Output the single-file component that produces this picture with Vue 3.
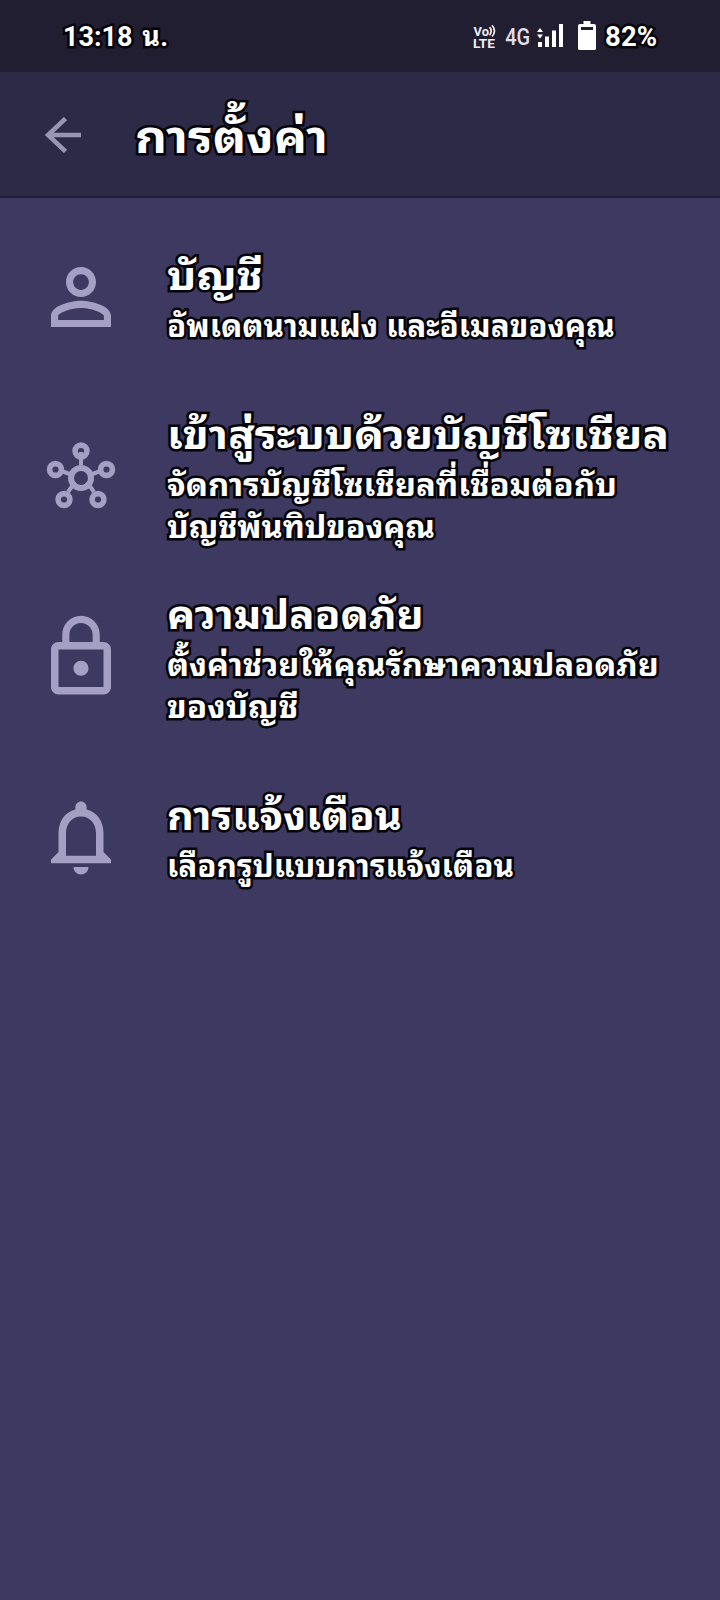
<script setup>
const items = [
  { icon: 'person', title: ['บัญชี', 1.1], lines: [['อัพเดตนามแฝง และอีเมลของคุณ', 1.012]] },
  {
    icon: 'hub',
    title: ['เข้าสู่ระบบด้วยบัญชีโซเชียล', 1.098],
    lines: [['จัดการบัญชีโซเชียลที่เชื่อมต่อกับ', 1.059], ['บัญชีพันทิปของคุณ', 1.044]],
  },
  {
    icon: 'lock',
    title: ['ความปลอดภัย', 1.048],
    lines: [['ตั้งค่าช่วยให้คุณรักษาความปลอดภัย', 1.049], ['ของบัญชี', 1.075]],
  },
  { icon: 'bell', title: ['การแจ้งเตือน', 1.037], lines: [['เลือกรูปแบบการแจ้งเตือน', 1.013]] },
]
const stretch = (k) => ({ transform: `scaleX(${k})` })
</script>

<template>
  <div class="screen">
    <header class="status">
      <span class="clock outlined">13:18 <span class="unit">น.</span></span>
      <div class="indicators">
        <svg class="volte" width="24" height="26" viewBox="0 0 24 26">
          <text x="0.5" y="12" font-size="13.500" textLength="15.500" lengthAdjust="spacingAndGlyphs">Vo</text>
          <path d="M16.500 3.200q3.500 3.800 0 8M19 1.200q5 5.800 0 11.300" />
          <text x="0" y="24" font-size="13.500" textLength="22" lengthAdjust="spacingAndGlyphs">LTE</text>
        </svg>
        <span class="net">4G</span>
        <svg class="signal" width="26" height="24" viewBox="0 0 26 24">
          <path d="M0 8l3-4 3 4zM0 10.500h6l-3 4zM1 18h4v5H1zM8 12.500h4V23H8zM15 6.500h4V23h-4zM22 0h4v23h-4z" />
        </svg>
        <svg class="battery" width="18" height="30" viewBox="0 0 18 30">
          <path fill-rule="evenodd" d="M5.500 0h7v3H16q2 0 2 2v22.500q0 1.500-1.500 1.500h-15Q0 29 0 27.500V5q0-2 2-2h3.500zM3 6v3h12V6z" />
        </svg>
        <span class="percent outlined">82%</span>
      </div>
    </header>
    <div class="appbar">
      <svg class="back" width="38" height="36" viewBox="0 0 38 36">
        <path d="M36 18H3M20.500 1.500L3 18l17.500 16.500" />
      </svg>
      <h1 class="outlined" :style="stretch(1.075)">การตั้งค่า</h1>
    </div>
    <main class="list">
      <div v-for="item in items" :key="item.icon" class="row">
        <svg v-if="item.icon === 'person'" class="icon" viewBox="0 0 24 24">
          <path d="M12 5.900c1.160 0 2.100.94 2.100 2.100s-.94 2.100-2.100 2.100S9.900 9.160 9.900 8s.94-2.100 2.100-2.100m0 9c2.970 0 6.100 1.460 6.100 2.100v1.100H5.900V17c0-.64 3.130-2.100 6.100-2.100M12 4C9.790 4 8 5.790 8 8s1.790 4 4 4 4-1.790 4-4-1.790-4-4-4zm0 9c-2.670 0-8 1.340-8 4v3h16v-3c0-2.660-5.330-4-8-4z" />
        </svg>
        <svg v-else-if="item.icon === 'hub'" class="icon line" viewBox="0 0 90 90">
          <path d="M45 20v13M24 38.500l11 4M66 38.500l-11 4M32 60l7-10M58 60l-7-10" stroke-width="4" />
          <circle cx="45" cy="46" r="10" stroke-width="6" />
          <g stroke-width="5.600">
            <circle cx="45" cy="19" r="5.900" />
            <circle cx="19.500" cy="37.500" r="5.900" />
            <circle cx="70.500" cy="37.500" r="5.900" />
            <circle cx="28" cy="67.500" r="5.900" />
            <circle cx="62" cy="67.500" r="5.900" />
          </g>
        </svg>
        <svg v-else-if="item.icon === 'lock'" class="icon" viewBox="0 0 24 24">
          <path d="M18 8h-1V6c0-2.760-2.240-5-5-5S7 3.240 7 6v2H6c-1.100 0-2 .9-2 2v10c0 1.100.9 2 2 2h12c1.100 0 2-.9 2-2V10c0-1.100-.9-2-2-2zM8.900 6c0-1.710 1.390-3.100 3.100-3.100s3.100 1.390 3.100 3.100v2H8.900V6zM18 20H6V10h12v10zm-6-3c1.100 0 2-.9 2-2s-.9-2-2-2-2 .9-2 2 .9 2 2 2z" />
        </svg>
        <svg v-else class="icon" viewBox="0 0 24 24">
          <path d="M12 22c1.100 0 2-.9 2-2h-4c0 1.100.89 2 2 2zm6-6v-5c0-3.070-1.640-5.640-4.500-6.320V4c0-.83-.67-1.500-1.500-1.500s-1.500.67-1.500 1.500v.68C7.630 5.360 6 7.920 6 11v5l-2 2v1h16v-1l-2-2zm-2 1H8v-6c0-2.480 1.510-4.500 4-4.500s4 2.020 4 4.500v6z" />
        </svg>
        <div class="copy">
          <h2 class="outlined" :style="stretch(item.title[1])">{{ item.title[0] }}</h2>
          <p v-for="line in item.lines" :key="line[0]" class="outlined" :style="stretch(line[1])">{{ line[0] }}</p>
        </div>
      </div>
    </main>
  </div>
</template>

<style>
body { background: #3d3960; }
</style>

<style scoped>
.screen {
  height: 1600px;
  background: #3d3960;
  color: #fff;
  font-family: "Noto Sans Thai Looped", "Noto Sans Thai", "Noto Sans", sans-serif;
  overflow: hidden;
}
.outlined {
  -webkit-text-stroke: 5px #050409;
  paint-order: stroke fill;
  stroke-linejoin: round;
  white-space: nowrap;
  transform-origin: left center;
}
.status {
  height: 72px;
  background: #201e30;
  display: flex;
  align-items: center;
  justify-content: space-between;
  padding: 2px 63px 0 63px;
  font-family: Roboto, "Noto Sans Thai Looped", "Noto Sans Thai", "Noto Sans", sans-serif;
  box-sizing: border-box;
}
.clock, .percent { font-size: 27px; font-weight: 700; line-height: 70px; }
.percent { font-size: 27.5px; }
.unit { margin-left: 3px; letter-spacing: 0.3px; }
.indicators { display: flex; align-items: center; }
.volte { font-family: Roboto, sans-serif; font-weight: 700; fill: #eeedf3; }
.volte path { fill: none; stroke: #eeedf3; stroke-width: 1.700; }
.net { font-size: 23.5px; font-weight: 500; color: #e0dfe9; margin: 0 5px 0 6px; transform: scaleX(0.85); }
.signal, .battery { fill: #fff; }
.signal { margin-top: -2px; }
.battery { margin: -2px 9px 0 15px; }
.appbar {
  height: 126px;
  box-sizing: border-box;
  background: #2d2a48;
  border-bottom: 2px solid #211d38;
  display: flex;
  align-items: center;
  padding: 2px 0 0 45px;
}
.back { fill: none; stroke: #9a94b5; stroke-width: 4.500; }
h1 { margin: -6px 0 0 52px; font-size: 46px; line-height: 70px; font-weight: 700; }
.list { display: grid; grid-template-rows: repeat(4, 180px); padding-top: 9px; }
.row { display: flex; align-items: center; padding-left: 36px; }
.icon { width: 90px; height: 90px; flex: none; fill: #a69fc4; }
.line { fill: none; stroke: #a69fc4; }
.copy { margin-left: 41px; padding-bottom: 4px; }
h2, p { margin: 0; font-weight: 700; }
h2 { font-size: 40px; line-height: 50px; margin-bottom: 5px; }
p { font-size: 31px; line-height: 42px; }
</style>
